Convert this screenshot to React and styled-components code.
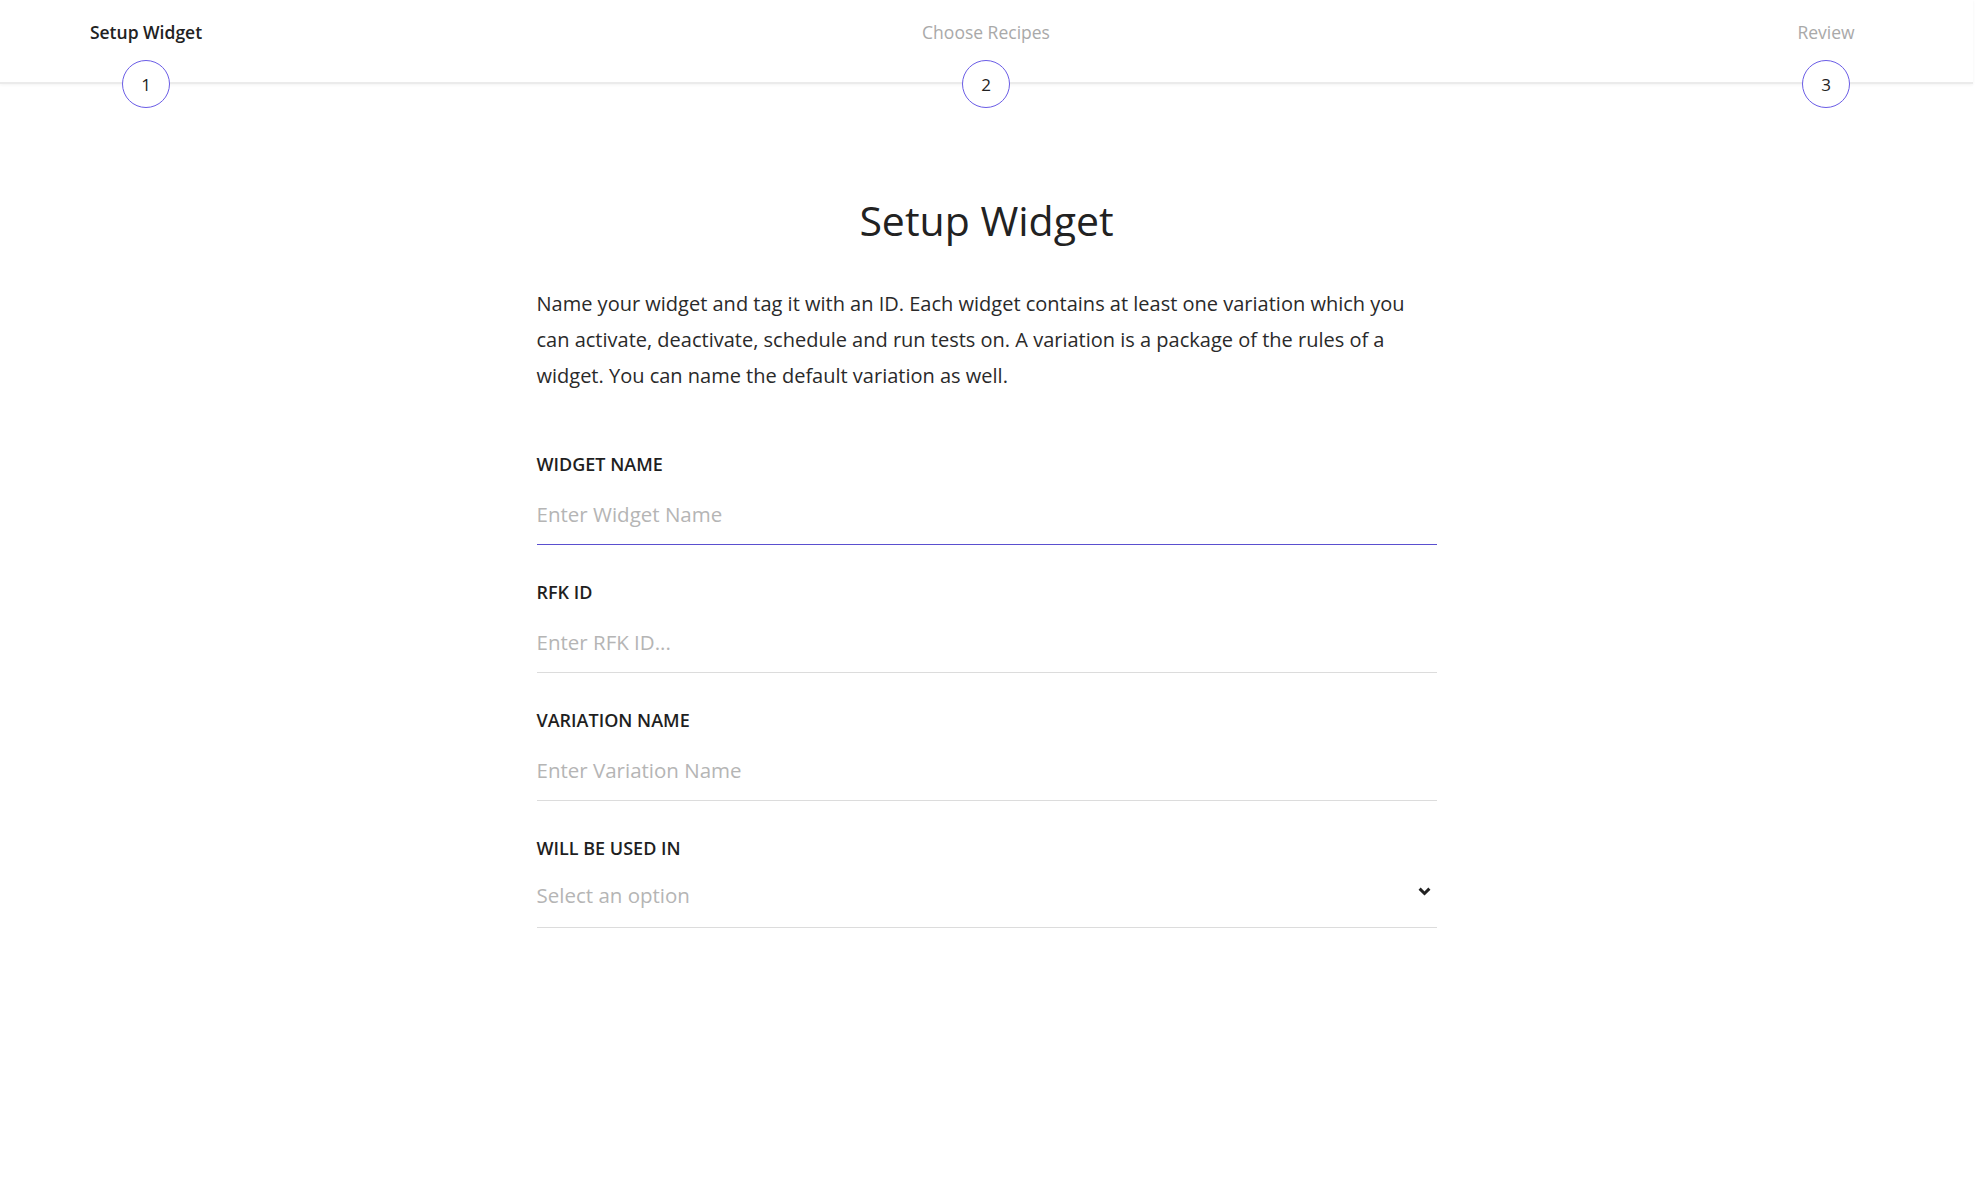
import React from 'react';
import styled, { createGlobalStyle } from 'styled-components';

const GlobalStyle = createGlobalStyle`
  html, body { margin: 0; padding: 0; background: #ffffff; }
  body { font-family: "Open Sans", "Noto Sans", sans-serif; color: #222222; }
  *, *::before, *::after { box-sizing: border-box; }
`;

const Page = styled.div`
  width: calc(100% - 11px);
  min-height: 1185px;
`;

const Header = styled.header`
  height: 84px;
  padding: 20px 91px 0 90px;
  display: flex;
  justify-content: space-between;
  align-items: flex-start;
  border-bottom: 2px solid #ebebeb;
  box-shadow: 0 1px 3px rgba(0, 0, 0, 0.05);
`;

const Step = styled.div`
  width: 112px;
  display: flex;
  flex-direction: column;
  align-items: center;
`;

const StepLabel = styled.span`
  font-size: 17.5px;
  line-height: 24px;
  white-space: nowrap;
  color: ${(p) => (p.$active ? '#222222' : '#a9a9a9')};
  font-weight: ${(p) => (p.$active ? 600 : 400)};
`;

const StepCircle = styled.div`
  position: relative;
  z-index: 1;
  margin-top: 16px;
  width: 48px;
  height: 48px;
  border-radius: 50%;
  border: 1.5px solid #6a5ce6;
  background: #ffffff;
  display: flex;
  align-items: center;
  justify-content: center;
  font-size: 17px;
  color: #222222;
`;

const Main = styled.main`
  width: 900px;
  margin: 0 auto;
  padding-top: 108px;
`;

const Title = styled.h1`
  margin: 0;
  text-align: center;
  font-size: 41px;
  font-weight: 400;
  line-height: 56px;
  color: #222222;
`;

const Intro = styled.p`
  margin: 38px 0 0;
  font-size: 20px;
  line-height: 36px;
  color: #2a2a2a;
`;

const Form = styled.form`
  margin-top: 58px;
  display: flex;
  flex-direction: column;
  gap: 35px;
`;

const Field = styled.label`
  display: flex;
  flex-direction: column;
  gap: 16px;
`;

const FieldLabel = styled.span`
  font-size: 18px;
  line-height: 24px;
  font-weight: 600;
  color: #1f1f1f;
  text-transform: uppercase;
`;

const TextInput = styled.input`
  height: 53px;
  padding: 0 0 8px;
  border: none;
  border-bottom: 1px solid ${(p) => (p.$active ? '#5a4fcf' : '#dcdcdc')};
  outline: none;
  font-family: inherit;
  font-size: 20.5px;
  line-height: 28px;
  color: #222222;
  background: transparent;
  &::placeholder { color: #b5b5b5; }
`;

const SelectBox = styled.div`
  height: 52px;
  padding: 4.5px 6px 0 0;
  display: flex;
  justify-content: space-between;
  align-items: flex-start;
  border-bottom: 1px solid #dcdcdc;
  cursor: pointer;
`;

const SelectText = styled.span`
  font-size: 20.5px;
  line-height: 28px;
  color: #b5b5b5;
`;

const Chevron = styled.svg`
  margin-top: 6px;
  width: 13px;
  height: 9px;
`;

const steps = [
  { n: 1, label: 'Setup Widget', active: true },
  { n: 2, label: 'Choose Recipes' },
  { n: 3, label: 'Review' },
];

export default function App() {
  return (
    <Page>
      <GlobalStyle />
      <Header>
        {steps.map((s) => (
          <Step key={s.n}>
            <StepLabel $active={s.active}>{s.label}</StepLabel>
            <StepCircle>{s.n}</StepCircle>
          </Step>
        ))}
      </Header>
      <Main>
        <Title>Setup Widget</Title>
        <Intro>
          Name your widget and tag it with an ID. Each widget contains at least one variation which you
          can activate, deactivate, schedule and run tests on. A variation is a package of the rules of a
          widget. You can name the default variation as well.
        </Intro>
        <Form onSubmit={(e) => e.preventDefault()}>
          <Field>
            <FieldLabel>Widget Name</FieldLabel>
            <TextInput $active placeholder="Enter Widget Name" />
          </Field>
          <Field>
            <FieldLabel>RFK ID</FieldLabel>
            <TextInput placeholder="Enter RFK ID..." />
          </Field>
          <Field>
            <FieldLabel>Variation Name</FieldLabel>
            <TextInput placeholder="Enter Variation Name" />
          </Field>
          <Field as="div">
            <FieldLabel>Will be used in</FieldLabel>
            <SelectBox>
              <SelectText>Select an option</SelectText>
              <Chevron viewBox="0 0 13 9">
                <path d="M1.6 1.6 L6.5 6.5 L11.4 1.6" fill="none" stroke="#222" strokeWidth="3" strokeLinecap="butt" strokeLinejoin="miter" />
              </Chevron>
            </SelectBox>
          </Field>
        </Form>
      </Main>
    </Page>
  );
}
